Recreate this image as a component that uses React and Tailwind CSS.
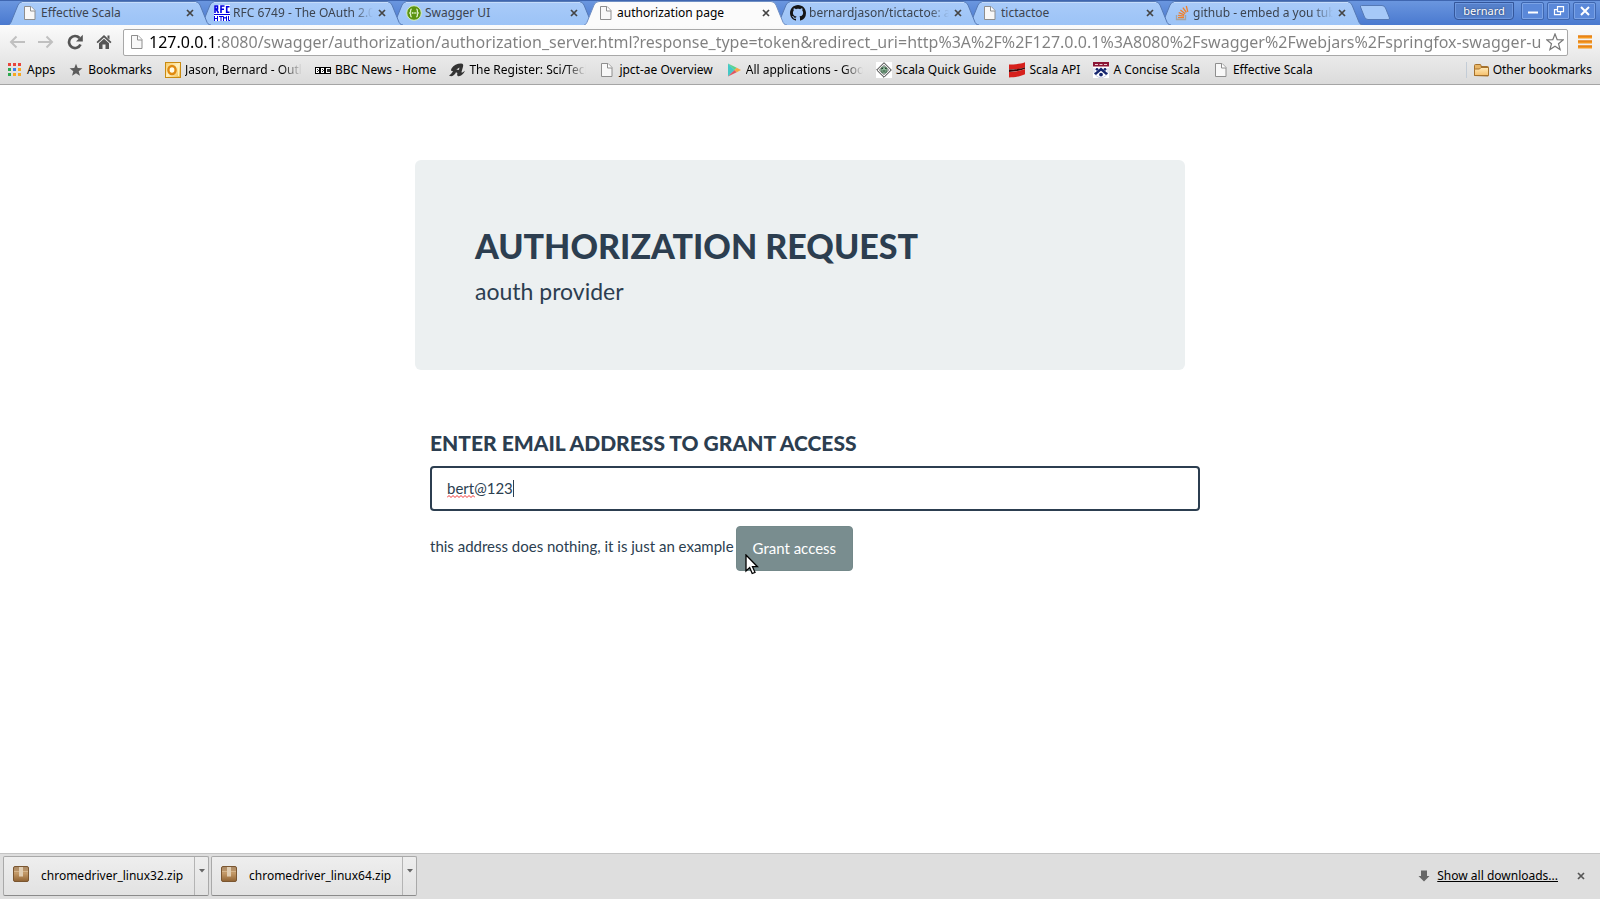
import React from "react";

const DocIcon = () => (
  <svg viewBox="0 0 16 16" className="size-4 shrink-0" aria-hidden="true">
    <path d="M2.500 1.500h6.500l4 4v9h-10.500z" fill="#f8f8f8" stroke="#8e8e8e" />
    <path d="M8.500 1.500v4.500h4.500" fill="#fff" stroke="#8e8e8e" />
  </svg>
);

const RfcIcon = () => (
  <svg viewBox="0 0 16 16" className="size-4 shrink-0" aria-hidden="true">
    <rect width="16" height="16" fill="#fff" />
    <path d="M0 9.500h16" stroke="#0000e0" />
    <path d="M1 8V1h2.500v3H1M2.500 4.500L4.500 8M7 8V1h3.500M7 4.300h3M15.500 1.700H12.700V7.300H15.500" fill="none" stroke="#0000e0" strokeWidth="1.600" />
    <path d="M.5 11v5M3.500 11v5M.5 13.500h3M5 11.500h4M7 11.500V16M9.500 16v-4.500l1.500 2 1.500-2V16M14.500 11v4.500H16" fill="none" stroke="#0000e0" />
  </svg>
);

const SwaggerIcon = () => (
  <svg viewBox="0 0 16 16" className="size-4 shrink-0" aria-hidden="true">
    <circle cx="8" cy="8" r="7.300" fill="#5c9410" stroke="#d6efc0" />
    <path d="M5.800 4c-1.600 0-1 1.800-1.300 3-.2.700-.8 1-1.300 1 .5 0 1.100.3 1.300 1 .3 1.200-.3 3 1.300 3M10.200 4c1.600 0 1 1.800 1.300 3 .2.700.8 1 1.300 1-.5 0-1.100.3-1.300 1-.3 1.200.3 3-1.300 3" fill="none" stroke="#e6f5d4" strokeWidth="1.200" />
    <path d="M5.800 8h4.600" stroke="#e6f5d4" strokeWidth="1.300" strokeDasharray="1.200 .5" />
  </svg>
);

const GithubIcon = () => (
  <svg viewBox="0 0 16 16" className="size-4 shrink-0" aria-hidden="true">
    <path fill="#151515" d="M8 0C3.580 0 0 3.580 0 8c0 3.540 2.290 6.530 5.470 7.590.4.070.55-.17.55-.38 0-.19-.01-.82-.01-1.490-2.010.37-2.530-.49-2.690-.94-.09-.23-.48-.94-.82-1.130-.28-.15-.68-.52-.01-.53.63-.01 1.080.58 1.230.82.72 1.210 1.870.87 2.330.66.07-.52.28-.87.51-1.070-1.780-.2-3.640-.89-3.640-3.950 0-.87.31-1.590.82-2.150-.08-.2-.36-1.020.08-2.120 0 0 .67-.21 2.200.82.64-.18 1.320-.27 2-.27s1.360.09 2 .27c1.530-1.040 2.200-.82 2.200-.82.44 1.100.16 1.920.08 2.120.51.56.82 1.270.82 2.150 0 3.070-1.870 3.750-3.650 3.950.29.25.54.73.54 1.480 0 1.070-.01 1.930-.01 2.200 0 .21.15.46.55.38A8.010 8.010 0 0 0 16 8c0-4.420-3.580-8-8-8z" />
  </svg>
);

const StackIcon = () => (
  <svg viewBox="0 0 16 16" className="size-4 shrink-0" fill="none" aria-hidden="true">
    <path d="M2.500 10v4.500h9V10" stroke="#a3a3a3" strokeWidth="1.300" />
    <path d="M4 12.700h6M4.100 10.300l6 .9M4.700 7.700l5.600 2.200M6.400 5l4.800 3.700M8.900 2.700l3.500 4.800M12.300 1l1.500 5.800" stroke="#f0802b" strokeWidth="1.300" />
  </svg>
);

const AppsIcon = () => (
  <svg viewBox="0 0 16 16" className="size-4 shrink-0" aria-hidden="true">
    <path d="M1 1h3v3H1zM6 1h3v3H6zM11 1h3v3h-3z" fill="#e8453c" />
    <path d="M1 6h3v3H1zM1 11h3v3H1z" fill="#2da94f" />
    <path d="M6 6h3v3H6z" fill="#3b7ded" />
    <path d="M11 6h3v3h-3zM6 11h3v3H6zM11 11h3v3h-3z" fill="#f7a823" />
  </svg>
);

const StarIcon = () => (
  <svg viewBox="0 0 16 16" className="size-4 shrink-0" aria-hidden="true">
    <path d="M8 1.700l1.700 4.400 4.700.2-3.700 2.900 1.300 4.600L8 11.200l-4 2.600 1.300-4.600L1.600 6.300l4.700-.2z" fill="#5c5c5c" />
  </svg>
);

const OutlookIcon = () => (
  <svg viewBox="0 0 16 16" className="size-4 shrink-0" aria-hidden="true">
    <defs>
      <linearGradient id="outlook" x1="0" y1="0" x2="1" y2="1">
        <stop offset="0" stopColor="#f6c860" />
        <stop offset=".5" stopColor="#fff0c0" />
        <stop offset="1" stopColor="#f0b840" />
      </linearGradient>
    </defs>
    <rect x=".5" y=".5" width="15" height="15" fill="url(#outlook)" stroke="#c98a10" />
    <ellipse cx="7" cy="8" rx="3.600" ry="4" fill="#fffbe8" stroke="#e08a10" strokeWidth="2.400" />
    <path d="M13.500 2v12" stroke="#fff1b8" />
  </svg>
);

const BbcIcon = () => (
  <svg viewBox="0 0 16 16" className="size-4 shrink-0" shapeRendering="crispEdges" aria-hidden="true">
    <path d="M0 5h16v7H0z" fill="#000" />
    <path d="M1 6h3v5H1zM6 6h3v5H6zM11 6h4v5h-4z" fill="#fff" />
    <path d="M2 7h1v1H2zM2 9h1v1H2zM7 7h1v1H7zM7 9h1v1H7zM12 7h3v3h-3zM3 8h1v1H3zM8 8h1v1H8z" fill="#333" />
  </svg>
);

const RegisterIcon = () => (
  <svg viewBox="0 0 16 16" className="size-4 shrink-0" aria-hidden="true">
    <path d="M0 13.800C1.500 12.500 3 11 4 9 2 9.500 1.500 8 2.700 6.200 4.500 3.500 8 1.500 12 1.500c2.300.1 2.500 1.500 2 3.300L12.500 10c-.1 1 1.300.6 3.500-1.200-1.300 3-4.500 6-6.800 5.400-1.200-.4-1.200-1.700-.8-3.200L7 10.200c-1 2-2.500 3.400-4.500 4z" fill="#333" />
    <path d="M7.300 7.500l2.600.5.6-2.600z" fill="#dedede" />
  </svg>
);

const PlayIcon = () => (
  <svg viewBox="0 0 16 16" className="size-4 shrink-0" aria-hidden="true">
    <path d="M2 1.500v13L8.500 8z" fill="#43c8c6" />
    <path d="M2 1.500L8.500 8l2.200-2.200z" fill="#57d38c" />
    <path d="M2 14.500L8.500 8l2.200 2.200z" fill="#e05561" />
    <path d="M8.500 8l2.200-2.200L15 8l-4.300 2.200z" fill="#f6a545" />
  </svg>
);

const QuickIcon = () => (
  <svg viewBox="0 0 16 16" className="size-4 shrink-0" fill="none" aria-hidden="true">
    <rect width="16" height="16" fill="#fff" />
    <path d="M8 .7L15.300 8 8 15.300.7 8z" fill="#fff" stroke="#333" />
    <path d="M8 2.800L13.200 8 8 13.200 2.800 8z" fill="#e7ece8" stroke="#777" strokeWidth=".7" />
    <circle cx="8" cy="8" r="3.200" fill="#8db899" stroke="#4d7259" />
    <path d="M5.500 6.500h1.500M9 6.500h1.500M6.500 9h3" stroke="#22422d" />
  </svg>
);

const ScalaIcon = () => (
  <svg viewBox="0 0 16 16" className="size-4 shrink-0" aria-hidden="true">
    <path d="M0 2.500C5 2.500 12 2 16 .3v5C12 7.200 5 7.500 0 7.500z" fill="#d6201c" />
    <path d="M0 7.500c5 0 12-.5 16-2.200v1.400C12 8.500 5 9.800 0 10z" fill="#3a0808" />
    <path d="M0 10C5 9.900 12 8.700 16 7v5.300C12 14.500 5 15.300 0 15.500z" fill="#d6201c" />
  </svg>
);

const PennIcon = () => (
  <svg viewBox="0 0 16 16" className="size-4 shrink-0" aria-hidden="true">
    <rect width="16" height="16" fill="#fff" />
    <path d="M0 0h16v4.500H0z" fill="#8c1535" />
    <path d="M2 2.500h3M6.500 2.500h3M11 2.500h3" stroke="#e9cdd5" />
    <path d="M1 6v4c.5 3 3 5 7 6 4-1 6.500-3 7-6V6" fill="none" stroke="#c8cde4" />
    <path d="M8 5.500l7 6-2 1.500-5-4.300L3 13l-2-1.500z" fill="#16266e" />
    <circle cx="4" cy="7.300" r="1.400" fill="#16266e" />
    <circle cx="12" cy="7.300" r="1.400" fill="#16266e" />
    <circle cx="8" cy="12.600" r="1.900" fill="#16266e" />
  </svg>
);

const FolderIcon = () => (
  <svg viewBox="0 0 16 16" className="size-4 shrink-0" aria-hidden="true">
    <defs>
      <linearGradient id="folder" x1="0" y1="0" x2="0" y2="1">
        <stop offset="0" stopColor="#ffeab9" />
        <stop offset="1" stopColor="#f5bf6b" />
      </linearGradient>
    </defs>
    <path d="M1.500 13.500v-10q0-1 1-1h4.500q1 0 1 1v1h6.500q1 0 1 1v8q0 .5-.5.500z" fill="#e8b566" stroke="#a5712c" />
    <path d="M1.500 13.500v-5.500q0-1 1-1h4l1.500-1.500h7q.5 0 .5.500v7q0 .5-.5.500z" fill="url(#folder)" stroke="#a5712c" />
  </svg>
);

const PackageIcon = () => (
  <svg viewBox="0 0 16 16" className="size-4 shrink-0" aria-hidden="true">
    <defs>
      <linearGradient id="pack" x1="0" y1="0" x2="0" y2="1">
        <stop offset="0" stopColor="#a98a68" />
        <stop offset=".45" stopColor="#c49a68" />
        <stop offset="1" stopColor="#8f6232" />
      </linearGradient>
    </defs>
    <rect x=".5" y=".5" width="15" height="15" rx="1.500" fill="url(#pack)" stroke="#7a5630" />
    <path d="M1 5.500h14" stroke="#d5b48a" />
    <path d="M6 1h4v10l-1-1-1 1-1-1-1 1z" fill="#e0cdb2" />
  </svg>
);

const CloseGlyph = ({ color = "#444" }) => (
  <svg viewBox="0 0 8 8" className="size-2" aria-hidden="true">
    <path d="M1 1l6 6M7 1L1 7" stroke={color} strokeWidth="1.700" />
  </svg>
);

const tabs = [
  { title: "Effective Scala", Icon: DocIcon },
  { title: "RFC 6749 - The OAuth 2.0", Icon: RfcIcon, fade: true },
  { title: "Swagger UI", Icon: SwaggerIcon },
  { title: "authorization page", Icon: DocIcon, active: true },
  { title: "bernardjason/tictactoe: a", Icon: GithubIcon, fade: true },
  { title: "tictactoe", Icon: DocIcon },
  { title: "github - embed a you tub", Icon: StackIcon, fade: true },
];

const bookmarks = [
  { title: "Apps", Icon: AppsIcon },
  { title: "Bookmarks", Icon: StarIcon },
  { title: "Jason, Bernard - Outlo", Icon: OutlookIcon, fade: true },
  { title: "BBC News - Home", Icon: BbcIcon },
  { title: "The Register: Sci/Tech", Icon: RegisterIcon, fade: true },
  { title: "jpct-ae Overview", Icon: DocIcon },
  { title: "All applications - Goo", Icon: PlayIcon, fade: true },
  { title: "Scala Quick Guide", Icon: QuickIcon },
  { title: "Scala API", Icon: ScalaIcon },
  { title: "A Concise Scala", Icon: PennIcon },
  { title: "Effective Scala", Icon: DocIcon },
];

function Tab({ title, Icon, active, fade, order }) {
  return (
    <div className="relative -mr-[11px] h-6 w-[203px] min-w-0 shrink" style={{ zIndex: active ? 20 : 10 - order }}>
      <svg viewBox="0 0 203 24" preserveAspectRatio="none" className="absolute inset-0 size-full" aria-hidden="true">
        <defs>
          <linearGradient id="tabfill" x1="0" y1="0" x2="0" y2="1">
            <stop offset="0" stopColor="#a9cbf9" />
            <stop offset="1" stopColor="#9cc3f6" />
          </linearGradient>
        </defs>
        <path
          d="M0 24c2-.5 2.500-1.500 3.500-4L10 4Q11.500.5 15 .5H187Q190.500.5 192 4l6.500 16c1 2.500 1.500 3.500 4.500 4"
          fill={active ? "#fbfbfb" : "url(#tabfill)"}
          stroke={active ? "#6f8fc4" : "#5579b5"}
        />
        {!active && <path d="M14 1.500H188" stroke="#c5dcfb" />}
      </svg>
      <div className="relative flex h-full items-center pr-[15px] pl-[14px]">
        <Icon />
        <button
          type="button"
          className={
            "ml-[3px] min-w-0 flex-1 overflow-hidden text-left whitespace-nowrap " +
            (fade ? "[mask-image:linear-gradient(90deg,#000_calc(100%-20px),transparent)] " : "") +
            (active ? "text-black" : "text-[#3c4450]")
          }
        >
          {title}
        </button>
        <button type="button" aria-label={"Close " + title} className="ml-[3px] flex size-3 items-center justify-center">
          <CloseGlyph />
        </button>
      </div>
    </div>
  );
}

function WindowButton({ label, children }) {
  return (
    <button type="button" aria-label={label} className="flex h-[18px] w-[23px] items-center justify-center rounded-xs border border-[#3f67b0] bg-[#5a88d9] shadow-[inset_0_0_0_1px_#7ba3e6]">
      {children}
    </button>
  );
}

function DownloadItem({ name }) {
  return (
    <div className="flex h-10 w-[206px] rounded-xs border border-[#a9a9a9] border-b-[#8a8a8a] bg-gradient-to-b from-[#eeeeee] to-[#e2e2e2]">
      <button type="button" className="flex min-w-0 flex-1 items-center gap-3 pl-[9px]">
        <span className="pb-1"><PackageIcon /></span>
        <span>{name}</span>
      </button>
      <button type="button" aria-label={"Options for " + name} className="flex w-[14px] justify-center border-l border-[#b4b4b4] pt-3">
        <svg viewBox="0 0 6 4" className="h-1 w-1.5" aria-hidden="true"><path d="M0 0h6L3 3.500z" fill="#666" /></svg>
      </button>
    </div>
  );
}

export default function App() {
  return (
    <div className="flex min-h-screen flex-col bg-white font-['Noto_Sans',sans-serif] text-[12px] leading-4 text-black">
      <header>
        <div className="flex h-[25px] border-t border-[#3f66b0] bg-gradient-to-b from-[#6a96df] to-[#4a79cf] pl-2">
          <nav aria-label="Tabs" className="flex min-w-0">
            {tabs.map((tab, i) => <Tab key={tab.title} {...tab} order={i} />)}
          </nav>
          <button type="button" aria-label="New tab" className="ml-[7px] h-[17px] shrink-0 pt-1">
            <svg viewBox="0 0 32 15" className="h-[15px] w-8" aria-hidden="true">
              <path d="M2.500.5H23q2.500 0 3.500 2.500l4 10q.5 1.500-1.500 1.500H9q-2.500 0-3.500-2.500L1.500 2q-.5-1.500 1-1.500z" fill="#a6c9f8" stroke="#5579b5" />
            </svg>
          </button>
          <div className="ml-auto flex shrink-0 gap-[3px] pt-px pr-1">
            <button type="button" className="mr-1 h-[18px] w-[60px] rounded-b-sm border border-[#34569a] bg-[#5580cb] text-[11px] leading-4 text-white text-shadow-[0_0_2px_#1c2f55] shadow-[inset_0_0_0_1px_#6d97df]">bernard</button>
            <WindowButton label="Minimize">
              <svg viewBox="0 0 12 12" className="size-3"><path d="M1 7.500h10" stroke="#fff" strokeWidth="2" /></svg>
            </WindowButton>
            <WindowButton label="Restore">
              <svg viewBox="0 0 12 12" className="size-3" fill="none" stroke="#fff" strokeWidth="1.200"><path d="M4.500 1.600h6v5h-6zM4.500 4.600h-3v5h6v-3" /></svg>
            </WindowButton>
            <WindowButton label="Close window">
              <svg viewBox="0 0 12 12" className="size-3"><path d="M2 2l8 8M10 2l-8 8" stroke="#fff" strokeWidth="2" /></svg>
            </WindowButton>
          </div>
        </div>

        <div className="border-b border-[#a5a5a5] bg-gradient-to-b from-[#fbfbfb] to-[#dbdbdb]">
          <div className="flex h-[31px] items-center pt-[3px] pr-2 pl-[9px]">
            <button type="button" aria-label="Back" className="mr-[13px]">
              <svg viewBox="0 0 16 16" className="size-4" fill="none" stroke="#c0c0c0" strokeWidth="2"><path d="M16 8H2M7.500 2.500L2 8l5.500 5.500" /></svg>
            </button>
            <button type="button" aria-label="Forward" className="mr-[13px]">
              <svg viewBox="0 0 16 16" className="size-4" fill="none" stroke="#c0c0c0" strokeWidth="2"><path d="M0 8h14M8.500 2.500L14 8l-5.500 5.500" /></svg>
            </button>
            <button type="button" aria-label="Reload" className="mr-[13px]">
              <svg viewBox="0 0 16 16" className="size-4"><path d="M13.500 10.500A6 6 0 1 1 12.500 4" fill="none" stroke="#555" strokeWidth="2.700" /><path d="M15.800.8v6.700H9z" fill="#555" /></svg>
            </button>
            <button type="button" aria-label="Home" className="mr-[11px]">
              <svg viewBox="0 0 16 16" className="size-4"><path d="M8 1l7.500 7-1.200 1.200L8 3.500 1.700 9.200.5 8zM11.500 1.500h2v4l-2-1.800z" fill="#555" /><path d="M8 4.700l5 4.500V15H9.500v-4.500h-3V15H3V9.200z" fill="#555" /></svg>
            </button>
            <div className="flex h-[27px] min-w-0 flex-1 items-center rounded-xs border border-[#a8a8a8] bg-white pr-[3px] pl-[5px]">
              <DocIcon />
              <input
                aria-label="Address"
                readOnly
                defaultValue="127.0.0.1:8080/swagger/authorization/authorization_server.html?response_type=token&redirect_uri=http%3A%2F%2F127.0.0.1%3A8080%2Fswagger%2Fwebjars%2Fspringfox-swagger-u"
                className="ml-1 h-6 min-w-0 flex-1 bg-[linear-gradient(90deg,#000_0_66px,#808080_66px)] bg-clip-text text-[16px] text-transparent outline-none"
              />
              <button type="button" aria-label="Bookmark this page">
                <svg viewBox="0 0 18 18" className="size-[18px]"><path d="M9 1l2.200 5.600 6 .3-4.700 3.800 1.600 5.900L9 13.300l-5.100 3.300 1.600-5.900L.8 6.900l6-.3z" fill="#fff" stroke="#777" strokeWidth="1.200" /></svg>
              </button>
            </div>
            <button type="button" aria-label="Menu" className="ml-2.5">
              <svg viewBox="0 0 14 14" className="size-[14px]"><path d="M0 2h14M0 7h14M0 12h14" stroke="#f5981f" strokeWidth="3" /><path d="M0 1h14M0 6h14M0 11h14" stroke="#dd720c" /></svg>
            </button>
          </div>
          <nav aria-label="Bookmarks" className="flex h-7 items-center gap-[13px] pr-2 pl-[7px]">
            {bookmarks.map(({ title, Icon, fade }) => (
              <a key={title} href="#" className="flex items-center gap-1 whitespace-nowrap">
                <Icon />
                <span className={fade ? "w-[117px] overflow-hidden [mask-image:linear-gradient(90deg,#000_calc(100%-20px),transparent)]" : ""}>{title}</span>
              </a>
            ))}
            <a href="#" className="ml-auto flex items-center gap-1 border-l border-[#c3ccd6] pl-[6px] whitespace-nowrap">
              <FolderIcon />
              Other bookmarks
            </a>
          </nav>
        </div>
      </header>

      <main className="flex-1 px-4 pt-[75px] font-['Lato',sans-serif] text-[15px] leading-[21px] text-[#2c3e50]">
        <div className="mx-auto max-w-[770px]">
          <section className="rounded-md bg-[#ecf0f1] px-[60px] pt-[66px] pb-[62px]">
            <h1 className="text-[34px] leading-10 font-black">AUTHORIZATION REQUEST</h1>
            <p className="mt-2 text-[23px] leading-[34px]">aouth provider</p>
          </section>
          <form className="mt-[62px] -mr-[15px] ml-[15px]" onSubmit={(e) => e.preventDefault()}>
            <label htmlFor="email" className="block text-[21px] leading-[22px] font-black">ENTER EMAIL ADDRESS TO GRANT ACCESS</label>
            <div className="relative mt-3">
              <input id="email" type="text" defaultValue="bert@123" spellCheck={false} className="block h-[45px] w-full rounded-sm border-2 border-[#2c3e50] px-[15px] pb-0.5 outline-none" />
              <svg viewBox="0 0 28 3" className="absolute top-[29px] left-[17px] h-[3px] w-7" aria-hidden="true">
                <path d="M0 2.500l2-2 2 2 2-2 2 2 2-2 2 2 2-2 2 2 2-2 2 2 2-2 2 2 2-2 2 2" fill="none" stroke="#f03030" />
              </svg>
              <span className="absolute top-[14px] left-[83px] h-[17px] w-px bg-[#2c3e50]" />
            </div>
            <div className="mt-[15px] flex items-center gap-0.5">
              <p className="pb-1">this address does nothing, it is just an example</p>
              <button type="submit" className="relative h-[45px] rounded-sm border border-[#74898a] bg-[#798d8f] px-4 text-white">
                Grant access
                <svg viewBox="0 0 14 21" className="absolute top-[27px] left-[8px] h-[21px] w-[14px]" aria-hidden="true">
                  <path d="M1 1v16l3.700-3.400L7.200 19.500l2.800-1.200-2.500-5.600h5z" fill="#fff" stroke="#000" strokeWidth="1.300" />
                </svg>
              </button>
            </div>
          </form>
        </div>
      </main>

      <footer className="flex items-center gap-0.5 border-t border-[#c4c4c4] bg-[#dedede] px-[3px] pt-0.5 pb-[3px]">
        <DownloadItem name="chromedriver_linux32.zip" />
        <DownloadItem name="chromedriver_linux64.zip" />
        <a href="#" className="ml-auto flex items-center gap-[7px]">
          <svg viewBox="0 0 12 12" className="size-3" aria-hidden="true"><path d="M3 .5h6V6h2.500L6 11.500.5 6H3z" fill="#666" /></svg>
          <span className="underline">Show all downloads...</span>
        </a>
        <button type="button" aria-label="Close downloads" className="mr-[10px] ml-[15px] flex size-3 items-center justify-center"><CloseGlyph color="#555" /></button>
      </footer>
    </div>
  );
}
